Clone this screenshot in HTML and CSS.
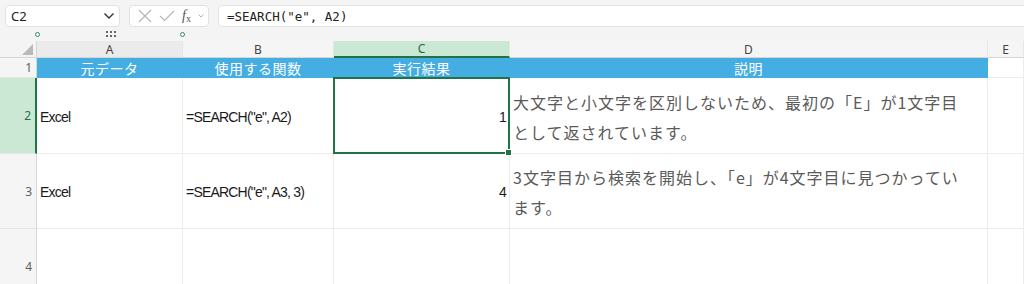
FILE: index.html
```html
<!DOCTYPE html>
<html lang="ja">
<head>
    <meta charset="UTF-8">
    <title>SEARCH関数</title>
    <link rel="stylesheet" href="styles.css">
</head>
<body>
    <!-- barra de fórmulas -->
    <div class="formula-bar">
        <div class="name-box">
            <span>C2</span>
            <svg width="12" height="8" viewBox="0 0 12 8"><path d="M1.5 1.5 L6 6 L10.5 1.5" fill="none" stroke="#333" stroke-width="1.4"/></svg>
        </div>
        <div class="fx-box">
            <svg width="14" height="14" viewBox="0 0 14 14"><path d="M1 1 L13 13 M13 1 L1 13" stroke="#b5b5b5" stroke-width="1.2"/></svg>
            <svg width="16" height="12" viewBox="0 0 16 12"><path d="M1 6 L5.5 10.5 L15 1" fill="none" stroke="#b5b5b5" stroke-width="1.2"/></svg>
            <span class="fx"><i>f</i><sub>x</sub></span>
            <svg width="6" height="4" viewBox="0 0 6 4"><path d="M0.5 0.5 L3 3 L5.5 0.5" fill="none" stroke="#aaa" stroke-width="0.9"/></svg>
        </div>
        <div class="formula">=SEARCH("e", A2)</div>
    </div>

    <div class="handles">
        <span class="dot-left"></span>
        <svg class="grip" width="10" height="6" viewBox="0 0 10 6"><g fill="#666"><rect x="0" y="0" width="2" height="2"/><rect x="4" y="0" width="2" height="2"/><rect x="8" y="0" width="2" height="2"/><rect x="0" y="4" width="2" height="2"/><rect x="4" y="4" width="2" height="2"/><rect x="8" y="4" width="2" height="2"/></g></svg>
        <span class="dot-right"></span>
    </div>

    <!-- hoja -->
    <div class="sheet">
        <div class="corner"><span class="tri"></span></div>
        <div class="col-head hover">A</div>
        <div class="col-head">B</div>
        <div class="col-head sel">C</div>
        <div class="col-head">D</div>
        <div class="col-head">E</div>

        <div class="row-head">1</div>
        <div class="cell title">元データ</div>
        <div class="cell title">使用する関数</div>
        <div class="cell title">実行結果</div>
        <div class="cell title">説明</div>
        <div class="cell"></div>

        <div class="row-head sel">2</div>
        <div class="cell">Excel</div>
        <div class="cell">=SEARCH("e", A2)</div>
        <div class="cell num active">1</div>
        <div class="cell note">大文字と小文字を区別しないため、最初の「E」が1文字目<br>として返されています。</div>
        <div class="cell"></div>

        <div class="row-head">3</div>
        <div class="cell">Excel</div>
        <div class="cell">=SEARCH("e", A3, 3)</div>
        <div class="cell num">4</div>
        <div class="cell note">3文字目から検索を開始し、「e」が4文字目に見つかってい<br>ます。</div>
        <div class="cell"></div>

        <div class="row-head">4</div>
        <div class="cell"></div>
        <div class="cell"></div>
        <div class="cell"></div>
        <div class="cell"></div>
        <div class="cell"></div>
    </div>
</body>
</html>
```

FILE: styles.css
```css
body {
    margin: 0;
    width: 1024px;
    height: 284px;
    overflow: hidden;
    background: #fff;
    font-family: "Liberation Sans", Arial, "Noto Sans CJK JP", sans-serif;
}

.formula-bar {
    display: flex;
    gap: 9px;
    padding: 5px 0 3px 5px;
    background: #f4f4f4;
    border-top: 2px solid #e6e6e6;
    margin-top: -2px;
}

.name-box, .fx-box, .formula {
    height: 22px;
    box-sizing: border-box;
    background: #fff;
    border: 1px solid #e2e2e2;
    border-radius: 4px;
    display: flex;
    align-items: center;
}

.name-box {
    width: 115px;
    justify-content: space-between;
    padding: 0 4px 0 5px;
    font-family: "Noto Sans", sans-serif;
    font-size: 13px;
    color: #222;
}

.fx-box {
    width: 80px;
    padding: 0 4px 0 8px;
    justify-content: space-between;
}

.fx {
    font-family: "Liberation Serif", serif;
    font-size: 14px;
    color: #555;
    line-height: 1;
}
.fx sub {
    font-size: 10px;
    vertical-align: -2px;
}

.formula {
    flex: 1;
    margin-right: -10px;
    padding-left: 8px;
    font-family: "DejaVu Sans Mono", monospace;
    font-size: 12.5px;
    color: #222;
}

.handles {
    position: relative;
    height: 11px;
    background: #f4f4f4;
}
.grip {
    position: absolute;
    left: 106px;
    top: 1px;
}
.dot-left, .dot-right {
    position: absolute;
    width: 3px;
    height: 3px;
    border: 1px solid #2e8b57;
    border-radius: 50%;
    background: #fff;
    top: 2px;
}
.dot-left { left: 35px; }
.dot-right { left: 180px; }

.sheet {
    display: grid;
    grid-template-columns: 37px 146px 151px 176px 478px 36px;
    grid-template-rows: 17px 20px 76px 75px 76px;
    height: 243px;
    overflow: hidden;
}

.sheet > div {
    box-sizing: border-box;
}

.corner {
    background: #f4f4f4;
    border-right: 1px solid #d6d6d6;
    border-bottom: 1px solid #d6d6d6;
    position: relative;
}
.tri {
    position: absolute;
    right: 3px;
    bottom: 2px;
    width: 0;
    height: 0;
    border-left: 11px solid transparent;
    border-bottom: 11px solid #b9b9b9;
}

.col-head {
    background: #f5f5f5;
    border-right: 1px solid #e6e6e6;
    border-bottom: 1px solid #d6d6d6;
    display: flex;
    align-items: center;
    justify-content: center;
    font-family: "Noto Sans", sans-serif;
    font-size: 12px;
    color: #444;
}
.col-head.hover {
    background: #ebebeb;
}
.col-head.sel {
    background: #cbe8d4;
    color: #1d6b3e;
    border-bottom: 2px solid #217346;
}

.row-head {
    background: #f5f5f5;
    border-right: 1px solid #d6d6d6;
    border-bottom: 1px solid #e6e6e6;
    display: flex;
    align-items: center;
    justify-content: flex-end;
    padding-right: 4px;
    font-family: "Noto Sans", sans-serif;
    font-size: 12px;
    color: #616161;
}
.row-head.sel {
    background: #cbe8d4;
    color: #217346;
    border-right: 2px solid #217346;
}

.cell {
    border-right: 1px solid #ececec;
    border-bottom: 1px solid #ececec;
    display: flex;
    align-items: center;
    padding: 2px 3px 0;
    font-size: 14px;
    letter-spacing: -0.8px;
    color: #1a1a1a;
    white-space: nowrap;
}

.cell.title {
    background: #44ade1;
    border-color: #44ade1;
    justify-content: center;
    padding: 0 3px;
    color: #fff;
    font-family: "Noto Sans CJK JP", sans-serif;
    font-size: 14px;
    letter-spacing: 0.5px;
}

.cell.num {
    justify-content: flex-end;
}

.cell.active {
    position: relative;
}
.cell.active::before {
    content: "";
    position: absolute;
    left: -1px;
    top: -1px;
    right: -1px;
    bottom: -1px;
    border: 2px solid #217346;
}
.cell.active::after {
    content: "";
    position: absolute;
    right: -3px;
    bottom: -3px;
    width: 5px;
    height: 5px;
    background: #217346;
    border: 1px solid #fff;
}

.cell.note {
    font-family: "Noto Sans CJK JP", sans-serif;
    font-size: 16px;
    letter-spacing: 1px;
    line-height: 30px;
    color: #5a5a5a;
    padding-top: 2px;
}
```
